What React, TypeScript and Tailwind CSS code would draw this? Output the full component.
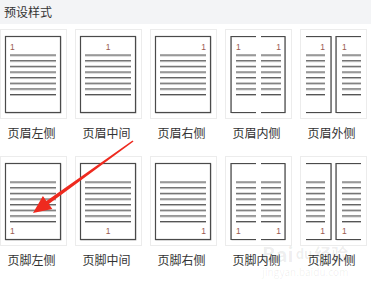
type Kind = 'left' | 'center' | 'right' | 'inner' | 'outer';

const rows: { pos: 'top' | 'bottom'; prefix: string }[] = [
  { pos: 'top', prefix: '页眉' },
  { pos: 'bottom', prefix: '页脚' },
];

const kinds: { kind: Kind; label: string }[] = [
  { kind: 'left', label: '左侧' },
  { kind: 'center', label: '中间' },
  { kind: 'right', label: '右侧' },
  { kind: 'inner', label: '内侧' },
  { kind: 'outer', label: '外侧' },
];

const lineYs = [25, 30.7, 36.3, 42, 47.6, 53.2, 58.9, 64.5];

function Lines({ x1, x2 }: { x1: number; x2: number }) {
  return (
    <>
      {lineYs.map((y) => (
        <g key={y}>
          <line x1={x1} x2={x2} y1={y + 1} y2={y + 1} stroke="#bdbdbd" strokeWidth={1} />
          <line x1={x1} x2={x2} y1={y} y2={y} stroke="#555" strokeWidth={1} />
        </g>
      ))}
    </>
  );
}

function Num({ x, anchor, pos }: { x: number; anchor: 'start' | 'middle' | 'end'; pos: 'top' | 'bottom' }) {
  return (
    <text
      x={x}
      y={pos === 'top' ? 19.5 : 76.5}
      textAnchor={anchor}
      fontSize={8.5}
      fill="#9a5a50"
      fontFamily="'Liberation Sans', Arial, sans-serif"
    >
      1
    </text>
  );
}

function Thumb({ kind, pos }: { kind: Kind; pos: 'top' | 'bottom' }) {
  const stroke = '#4a4a4a';
  return (
    <svg width={65} height={88} viewBox="0 0 65 88">
      {(kind === 'left' || kind === 'center' || kind === 'right') && (
        <>
          <rect x={5} y={7} width={55} height={76} fill="none" stroke="#d0d0d0" strokeWidth={1} />
          <rect x={4.5} y={6.5} width={55} height={76} fill="white" stroke={stroke} strokeWidth={1.2} />
          <Lines x1={9} x2={55} />
          {kind === 'left' && <Num x={9} anchor="start" pos={pos} />}
          {kind === 'center' && <Num x={32} anchor="middle" pos={pos} />}
          {kind === 'right' && <Num x={55} anchor="end" pos={pos} />}
        </>
      )}
      {kind === 'inner' && (
        <>
          <path d="M30,7 H5.5 V83 H30" fill="none" stroke="#d0d0d0" strokeWidth={1} />
          <path d="M30,6.5 H5 V82.5 H30" fill="none" stroke={stroke} strokeWidth={1.2} />
          <path d="M35,7 H59.5 V83 H35" fill="none" stroke="#d0d0d0" strokeWidth={1} />
          <path d="M35,6.5 H59 V82.5 H35" fill="none" stroke={stroke} strokeWidth={1.2} />
          <Lines x1={10} x2={30} />
          <Lines x1={35} x2={55} />
          <Num x={10} anchor="start" pos={pos} />
          <Num x={55} anchor="end" pos={pos} />
        </>
      )}
      {kind === 'outer' && (
        <>
          <path d="M5,7 H30.5 V83 H5" fill="none" stroke="#d0d0d0" strokeWidth={1} />
          <path d="M5,6.5 H30 V82.5 H5" fill="none" stroke={stroke} strokeWidth={1.2} />
          <path d="M60,7 H35.5 V83 H60" fill="none" stroke="#d0d0d0" strokeWidth={1} />
          <path d="M60,6.5 H35 V82.5 H60" fill="none" stroke={stroke} strokeWidth={1.2} />
          <Lines x1={5} x2={24} />
          <Lines x1={41} x2={60} />
          <Num x={24} anchor="end" pos={pos} />
          <Num x={41} anchor="start" pos={pos} />
        </>
      )}
    </svg>
  );
}

export default function App() {
  return (
    <div
      className="relative w-[375px] h-[285px] overflow-hidden bg-white text-[#333]"
      style={{ fontFamily: "'Noto Sans CJK SC', 'Liberation Sans', sans-serif" }}
    >
      <div className="w-[371px] h-6 bg-[#f3f4f6] pl-[4px] flex items-center text-xs text-[#333]">
        预设样式
      </div>

      <div className="mt-[5px] flex flex-col gap-[15px]">
        {rows.map((row) => (
          <div key={row.prefix} className="flex gap-2">
            {kinds.map((k) => (
              <div key={k.kind} className="w-[67px] flex flex-col items-center">
                <div className="w-[67px] h-[90px] border border-[#ececec] bg-white">
                  <Thumb kind={k.kind} pos={row.pos} />
                </div>
                <div className="mt-[6px] text-xs leading-4 pr-[4px]">
                  {row.prefix}
                  {k.label}
                </div>
              </div>
            ))}
          </div>
        ))}
      </div>

      {/* red arrow overlay */}
      <svg className="absolute left-0 top-0 pointer-events-none" width={375} height={285}>
        <polygon
          points="133.5,141.6 132.5,140.4 46.4,200.9 42.9,196 33,213 52.3,209 48.8,204.1"
          fill="#ee2a1f"
        />
      </svg>

      {/* watermark */}
      <div className="absolute left-[262px] top-[242px] flex flex-col items-center text-[#000]/[0.07] pointer-events-none">
        <div className="flex items-center gap-[2px] text-[20px] font-bold leading-6">
          <span>Bai</span>
          <span className="text-[13px]">du</span>
          <span className="text-[17px]">经验</span>
        </div>
        <div className="text-[10px] leading-3">jingyan.baidu.com</div>
      </div>
    </div>
  );
}
